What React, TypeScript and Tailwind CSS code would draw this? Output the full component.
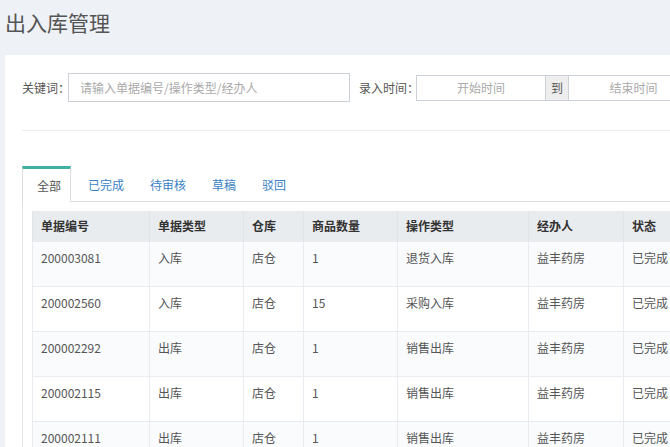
import React from "react";

const rows = [
  ["200003081", "入库", "店仓", "1", "退货入库", "益丰药房", "已完成"],
  ["200002560", "入库", "店仓", "15", "采购入库", "益丰药房", "已完成"],
  ["200002292", "出库", "店仓", "1", "销售出库", "益丰药房", "已完成"],
  ["200002115", "出库", "店仓", "1", "销售出库", "益丰药房", "已完成"],
  ["200002111", "出库", "店仓", "1", "销售出库", "益丰药房", "已完成"],
];

const headers = ["单据编号", "单据类型", "仓库", "商品数量", "操作类型", "经办人", "状态"];
const widths = ["w-[117px]", "w-[94px]", "w-[60px]", "w-[94px]", "w-[131px]", "w-[95px]", "w-[100px]"];

export default function App() {
  return (
    <div
      className="w-full h-screen overflow-hidden bg-[#eef1f5] flex flex-col text-[12px] text-[#555]"
      style={{ fontFamily: '"Noto Sans CJK SC", "Noto Sans", sans-serif' }}
    >
      <div className="h-[55px] shrink-0 pl-[5px] pt-[8px]">
        <h1 className="text-[21px] leading-[28px] text-[#555] font-normal">出入库管理</h1>
      </div>
      <div className="flex-1 ml-[5px] bg-white pl-[17px] overflow-hidden">
        <div className="flex items-center mt-[18px] whitespace-nowrap">
          <span className="w-[46px] shrink-0 text-[#555]">关键词：</span>
          <div className="w-[282px] h-[29px] shrink-0 border border-[#ccd0d8] flex items-center pl-[11px] text-[#aaa]">
            请输入单据编号/操作类型/经办人
          </div>
          <span className="ml-[9px] w-[57px] shrink-0 text-[#555]">录入时间：</span>
          <div className="w-[130px] h-[26px] shrink-0 border border-[#ccd0d8] flex items-center justify-center text-[#aaa]">
            开始时间
          </div>
          <div className="w-[22px] h-[26px] shrink-0 border-y border-[#ccd0d8] bg-[#eeeeee] flex items-center justify-center text-[#555]">
            到
          </div>
          <div className="w-[131px] h-[26px] shrink-0 border border-[#ccd0d8] flex items-center justify-center text-[#aaa]">
            结束时间
          </div>
        </div>
        <div className="mt-[28px] h-px bg-[#eeeeee] w-[900px]" />
        <div className="mt-[35px] flex h-[36px] border-b border-[#dddddd] w-[900px]">
          <div className="-mb-px h-[36px] pl-[14px] pr-[9px] mr-[2px] bg-white border-t-[3px] border-t-[#3fb1a3] border-x border-x-[#dddddd] flex items-center text-[#555]">
            全部
          </div>
          {["已完成", "待审核", "草稿", "驳回"].map((t) => (
            <div key={t} className="h-[35px] pl-[15px] pr-[9px] mr-[2px] flex items-center pt-[3px] text-[#3a7fc4]">
              {t}
            </div>
          ))}
        </div>
        <div className="border-l border-[#e5e5e5] pl-[9px] pt-[9px] h-full">
          <table className="table-fixed border-collapse w-[691px]">
            <thead>
              <tr className="bg-[#e9ecef] h-[30px]">
                {headers.map((h, i) => (
                  <th
                    key={h}
                    className={`${widths[i]} text-left font-semibold text-[#333] pl-[8px] border-x border-[#e0e4e8] align-middle`}
                  >
                    {h}
                  </th>
                ))}
              </tr>
            </thead>
            <tbody>
              {rows.map((r, ri) => (
                <tr key={ri} className={ri % 2 === 0 ? "bg-[#f9fbfd] h-[45px]" : "bg-white h-[45px]"}>
                  {r.map((c, ci) => (
                    <td
                      key={ci}
                      className="align-top pl-[8px] pt-[7px] leading-[17px] border border-[#e8ecf0] text-[#555] whitespace-nowrap"
                    >
                      {c}
                    </td>
                  ))}
                </tr>
              ))}
            </tbody>
          </table>
        </div>
      </div>
    </div>
  );
}
